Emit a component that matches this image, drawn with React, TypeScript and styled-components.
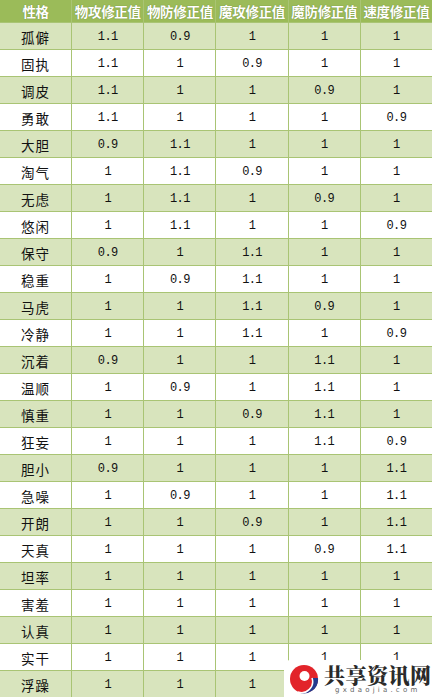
import styled, { createGlobalStyle } from "styled-components";

const GlobalStyle = createGlobalStyle`
  html, body { margin: 0; padding: 0; background: #ffffff; }
  body { width: 432px; height: 698px; overflow: hidden; }
`;

const header = ["性格", "物攻修正值", "物防修正值", "魔攻修正值", "魔防修正值", "速度修正值"];

const rows: [string, string, string, string, string, string][] = [
  ["孤僻", "1.1", "0.9", "1", "1", "1"],
  ["固执", "1.1", "1", "0.9", "1", "1"],
  ["调皮", "1.1", "1", "1", "0.9", "1"],
  ["勇敢", "1.1", "1", "1", "1", "0.9"],
  ["大胆", "0.9", "1.1", "1", "1", "1"],
  ["淘气", "1", "1.1", "0.9", "1", "1"],
  ["无虑", "1", "1.1", "1", "0.9", "1"],
  ["悠闲", "1", "1.1", "1", "1", "0.9"],
  ["保守", "0.9", "1", "1.1", "1", "1"],
  ["稳重", "1", "0.9", "1.1", "1", "1"],
  ["马虎", "1", "1", "1.1", "0.9", "1"],
  ["冷静", "1", "1", "1.1", "1", "0.9"],
  ["沉着", "0.9", "1", "1", "1.1", "1"],
  ["温顺", "1", "0.9", "1", "1.1", "1"],
  ["慎重", "1", "1", "0.9", "1.1", "1"],
  ["狂妄", "1", "1", "1", "1.1", "0.9"],
  ["胆小", "0.9", "1", "1", "1", "1.1"],
  ["急噪", "1", "0.9", "1", "1", "1.1"],
  ["开朗", "1", "1", "0.9", "1", "1.1"],
  ["天真", "1", "1", "1", "0.9", "1.1"],
  ["坦率", "1", "1", "1", "1", "1"],
  ["害羞", "1", "1", "1", "1", "1"],
  ["认真", "1", "1", "1", "1", "1"],
  ["实干", "1", "1", "1", "1", "1"],
  ["浮躁", "1", "1", "1", "1", "1"],
];

const Page = styled.div`
  position: relative;
  width: 432px;
  height: 698px;
  overflow: hidden;
`;

const Grid = styled.div`
  display: grid;
  grid-template-columns: repeat(6, 1fr);
  grid-auto-rows: 26px;
  grid-template-rows: 22px;
  row-gap: 1px;
  column-gap: 1px;
  background: #a9c474;
  width: 432px;
`;

const HeadCell = styled.div`
  display: flex;
  align-items: center;
  justify-content: center;
  background: #9bbb59;
  color: #ffffff;
  font-family: "Noto Sans CJK SC", sans-serif;
  font-weight: 700;
  font-size: 13.5px;
  letter-spacing: -0.3px;
  white-space: nowrap;
  text-shadow: 0 0 1px rgba(60, 80, 20, 0.6);
`;

const Cell = styled.div<{ $striped: boolean; $name?: boolean }>`
  display: flex;
  align-items: center;
  justify-content: center;
  background: ${(p) => (p.$striped ? "#d8e4bd" : "#ffffff")};
  color: #111111;
  font-family: ${(p) =>
    p.$name ? '"Noto Sans CJK SC", sans-serif' : '"Liberation Mono", monospace'};
  font-size: ${(p) => (p.$name ? "13.5px" : "12px")};
  letter-spacing: ${(p) => (p.$name ? "1px" : "-0.6px")};
  padding-top: 1px;
`;

const Watermark = styled.div`
  position: absolute;
  right: 0;
  bottom: 0;
  width: 148px;
  height: 38px;
  background: #ffffff;
  border-top-left-radius: 6px;
  display: flex;
  align-items: center;
  gap: 5px;
  padding-left: 5px;
  box-sizing: border-box;
`;

const BrandText = styled.div`
  display: flex;
  flex-direction: column;
  align-items: center;
  line-height: 1;
`;

const BrandName = styled.div`
  font-family: "Noto Serif CJK SC", "Noto Sans CJK SC", serif;
  font-weight: 900;
  font-size: 21px;
  color: #2a2a2a;
  letter-spacing: 0.5px;
`;

const BrandUrl = styled.div`
  font-family: "DejaVu Sans", sans-serif;
  font-size: 7px;
  color: #666666;
  letter-spacing: 3.2px;
  margin-top: 2px;
`;

const Logo = () => (
  <svg width="30" height="32" viewBox="0 0 30 32">
    <circle cx="15" cy="16" r="14" fill="#e2242a" />
    <path d="M29 15 A14 14 0 0 1 9 29 A11 11 0 0 0 23 15 Z" fill="#233a8e" />
    <path d="M23 15 A11 11 0 0 1 9 29" fill="none" stroke="#ffffff" strokeWidth="1.5" />
    <circle cx="15.5" cy="13" r="5" fill="#ffffff" />
  </svg>
);

export default function App() {
  return (
    <Page>
      <GlobalStyle />
      <Grid>
        {header.map((h) => (
          <HeadCell key={h}>{h}</HeadCell>
        ))}
        {rows.map((r, i) =>
          r.map((v, j) => (
            <Cell key={`${i}-${j}`} $striped={i % 2 === 0} $name={j === 0}>
              {v}
            </Cell>
          ))
        )}
      </Grid>
      <Watermark>
        <Logo />
        <BrandText>
          <BrandName>共享资讯网</BrandName>
          <BrandUrl>gxdaojia.com</BrandUrl>
        </BrandText>
      </Watermark>
    </Page>
  );
}
